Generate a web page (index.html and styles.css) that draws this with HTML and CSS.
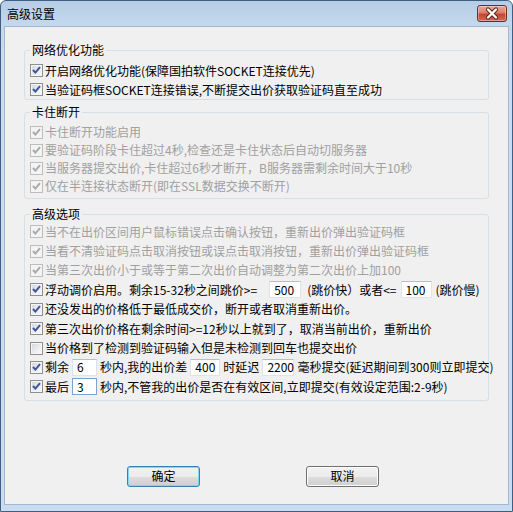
FILE: index.html
```html
<!DOCTYPE html>
<html lang="zh-CN">
<head>
<meta charset="utf-8">
<title>高级设置</title>
<link rel="stylesheet" href="styles.css">
</head>
<body>
<div class="window">
  <div class="titlebar">
    <span class="title">高级设置</span>
    <div class="close">
      <svg width="30" height="17" viewBox="0 0 30 17"><path d="M11 4.5 L19 12.5 M19 4.5 L11 12.5" stroke="#5a1f14" stroke-width="4.2" stroke-linecap="round"/><path d="M11 4.5 L19 12.5 M19 4.5 L11 12.5" stroke="#fff" stroke-width="2.4" stroke-linecap="round"/></svg>
    </div>
  </div>
  <div class="client">
    <fieldset class="group g1">
      <legend>网络优化功能</legend>
      <div class="row"><span class="cb"><svg viewBox="0 0 13 13"><path d="M3 6 L5.4 8.6 L10 3.2"/></svg></span>开启网络优化功能(保障国拍软件SOCKET连接优先)</div>
      <div class="row"><span class="cb"><svg viewBox="0 0 13 13"><path d="M3 6 L5.4 8.6 L10 3.2"/></svg></span>当验证码框SOCKET连接错误,不断提交出价获取验证码直至成功</div>
    </fieldset>
    <fieldset class="group g2">
      <legend>卡住断开</legend>
      <div class="row off"><span class="cb"><svg viewBox="0 0 13 13"><path d="M3 6 L5.4 8.6 L10 3.2"/></svg></span>卡住断开功能启用</div>
      <div class="row off"><span class="cb"><svg viewBox="0 0 13 13"><path d="M3 6 L5.4 8.6 L10 3.2"/></svg></span>要验证码阶段卡住超过4秒,检查还是卡住状态后自动切服务器</div>
      <div class="row off"><span class="cb"><svg viewBox="0 0 13 13"><path d="M3 6 L5.4 8.6 L10 3.2"/></svg></span>当服务器提交出价,卡住超过6秒才断开，B服务器需剩余时间大于10秒</div>
      <div class="row off"><span class="cb"><svg viewBox="0 0 13 13"><path d="M3 6 L5.4 8.6 L10 3.2"/></svg></span>仅在半连接状态断开(即在SSL数据交换不断开)</div>
    </fieldset>
    <fieldset class="group g3">
      <legend>高级选项</legend>
      <div class="row off"><span class="cb"><svg viewBox="0 0 13 13"><path d="M3 6 L5.4 8.6 L10 3.2"/></svg></span>当不在出价区间用户鼠标错误点击确认按钮，重新出价弹出验证码框</div>
      <div class="row off"><span class="cb"><svg viewBox="0 0 13 13"><path d="M3 6 L5.4 8.6 L10 3.2"/></svg></span>当看不清验证码点击取消按钮或误点击取消按钮，重新出价弹出验证码框</div>
      <div class="row off"><span class="cb"><svg viewBox="0 0 13 13"><path d="M3 6 L5.4 8.6 L10 3.2"/></svg></span>当第三次出价小于或等于第二次出价自动调整为第二次出价上加100</div>
      <div class="row wide"><span class="cb"><svg viewBox="0 0 13 13"><path d="M3 6 L5.4 8.6 L10 3.2"/></svg></span>浮动调价启用。剩余15-32秒之间跳价&gt;=<span class="field w32 first">500</span>(跳价快）或者&lt;=<span class="field w31 second">100</span>(跳价慢)</div>
      <div class="row"><span class="cb"><svg viewBox="0 0 13 13"><path d="M3 6 L5.4 8.6 L10 3.2"/></svg></span>还没发出的价格低于最低成交价，断开或者取消重新出价。</div>
      <div class="row"><span class="cb"><svg viewBox="0 0 13 13"><path d="M3 6 L5.4 8.6 L10 3.2"/></svg></span>第三次出价价格在剩余时间&gt;=12秒以上就到了，取消当前出价，重新出价</div>
      <div class="row"><span class="cb empty"></span>当价格到了检测到验证码输入但是未检测到回车也提交出价</div>
      <div class="row"><span class="cb"><svg viewBox="0 0 13 13"><path d="M3 6 L5.4 8.6 L10 3.2"/></svg></span>剩余<span class="field w25">6</span>秒内,我的出价差<span class="field w30">400</span>时延迟<span class="field w32">2200</span>毫秒提交(延迟期间到300则立即提交)</div>
      <div class="row"><span class="cb"><svg viewBox="0 0 13 13"><path d="M3 6 L5.4 8.6 L10 3.2"/></svg></span>最后<span class="field w25 focus">3</span>秒内,不管我的出价是否在有效区间,立即提交(有效设定范围:2-9秒)</div>
    </fieldset>
    <div class="buttons">
      <button class="btn default">确定</button>
      <button class="btn">取消</button>
    </div>
  </div>
</div>
</body>
</html>
```
FILE: styles.css
```css
* { box-sizing: border-box; }
html, body { margin: 0; padding: 0; }
body {
  width: 513px;
  height: 512px;
  overflow: hidden;
  background: #ffffff;
  font-family: "Noto Sans CJK SC", "Liberation Sans", sans-serif;
  font-size: 12px;
  color: #000;
}
.window {
  width: 513px;
  height: 512px;
  display: flex;
  flex-direction: column;
  background: linear-gradient(#b6cde6 0px, #c4d8ed 24px, #c9dcf0 60px, #c9dcf0 100%);
  border: 1px solid #3f5f82;
  border-radius: 6px 6px 0 0;
  padding: 0 3px 6px 3px;
}
.titlebar {
  height: 25px;
  display: flex;
  align-items: center;
  padding-left: 3px;
}
.title {
  font-size: 12px;
  line-height: 14px;
  color: #000;
}
.close {
  margin-left: auto;
  margin-right: 2px;
  align-self: flex-start;
  margin-top: 4px;
  width: 30px;
  height: 17px;
  border: 1px solid #6e2c20;
  border-radius: 3px;
  background: linear-gradient(#eba898 0%, #d9806b 45%, #c4452d 55%, #d36a50 100%);
  box-shadow: inset 0 0 0 1px rgba(255,255,255,0.35);
  display: flex;
  align-items: center;
  justify-content: center;
}
.close svg { display: block; width: 30px; height: 17px; margin: -1px; }
.client {
  flex: 1;
  background: #f0f0f0;
  border: 1px solid #a3b8d0;
  padding: 0 19px;
}
.group {
  margin: 0;
  border: 1px solid #d5dfe5;
  border-radius: 3px;
  padding: 0 5px;
  min-width: 0;
}
.group legend {
  padding: 0 2px;
  line-height: 14px;
  height: 14px;
  color: #000;
}
.g1 { margin-top: 16px; padding-top: 4px; padding-bottom: 0; }
.g1 .row { height: 19px; }
.g2 { margin-top: 5px; padding-top: 4px; padding-bottom: 3px; }
.g2 .row { height: 18px; }
.g3 { margin-top: 8px; padding-top: 1px; padding-bottom: 3px; }
.g3 .row { height: 19.4px; }
.row {
  display: flex;
  align-items: center;
  white-space: nowrap;
  line-height: 14px;
  color: #000;
}
.row.off { color: #a0a0a0; }
.cb {
  flex: none;
  width: 13px;
  height: 13px;
  margin-right: 2px;
  border: 1px solid #8e8f8f;
  background: linear-gradient(135deg, #d3d6da 0%, #eceef0 60%, #fafafa 100%);
  box-shadow: inset 0 0 0 1px #f6f6f6;
  display: flex;
  align-items: center;
  justify-content: center;
}
.cb svg {
  display: block;
  width: 13px;
  height: 13px;
  margin: -1px;
  fill: none;
  stroke: #3d55a0;
  stroke-width: 2;
}
.off .cb {
  border-color: #bdbdbd;
  background: #f4f4f4;
  box-shadow: none;
}
.off .cb svg { stroke: #a9a9a9; }
.field {
  flex: none;
  height: 17px;
  margin: 0 3px;
  padding-left: 4px;
  display: flex;
  align-items: center;
  background: #fff;
  border: 1px solid #dfe3e9;
  border-top-color: #b9bdc5;
  color: #000;
  font-size: 12px;
}
.wide .field.first { margin: 0 6px 0 12px; }
.wide .field.second { margin: 0 4px 0 4px; }
.w25 { width: 25px; }
.w30 { width: 30px; }
.w31 { width: 31px; }
.w32 { width: 32px; }
.field.focus { border-color: #7da2ce; }
.buttons {
  display: flex;
  gap: 106px;
  padding-left: 103px;
  margin-top: 65px;
}
.btn {
  width: 73px;
  height: 21px;
  padding: 0;
  font-family: inherit;
  font-size: 12px;
  line-height: 14px;
  color: #000;
  border: 1px solid #707070;
  border-radius: 3px;
  background: linear-gradient(#f2f2f2 0%, #ebebeb 50%, #dddddd 51%, #cfcfcf 100%);
  box-shadow: inset 0 0 0 1px #fcfcfc;
}
.btn.default {
  border-color: #3c7fb1;
  box-shadow: inset 0 0 0 1px #7fd6f8;
}
```
